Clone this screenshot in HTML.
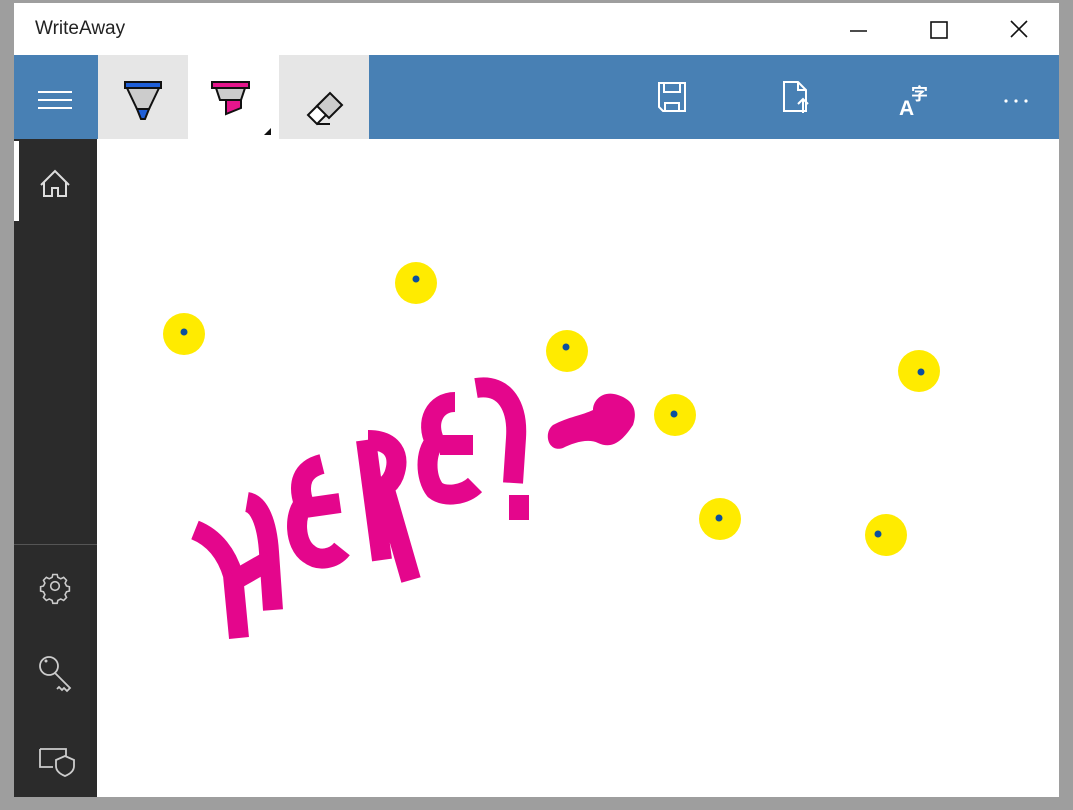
<!DOCTYPE html>
<html><head><style>
*{margin:0;padding:0;box-sizing:border-box}
body{width:1073px;height:810px;background:#9e9e9e;position:relative;overflow:hidden;font-family:"Liberation Sans","Segoe UI",sans-serif}
.win{position:absolute;left:14px;top:3px;width:1045px;height:794px;background:#fff}
.title{position:absolute;left:21px;top:15px;font-size:19px;color:#222}
.tb{position:absolute;left:0;top:52px;width:1045px;height:84px;background:#4880b4}
.side{position:absolute;left:0;top:136px;width:83px;height:658px;background:#2b2b2b}
svg{position:absolute}
</style></head><body>
<div class="win">
<div class="title">WriteAway</div>
<svg style="left:830px;top:10px" width="200" height="32" viewBox="0 0 200 32">
<line x1="6" y1="18" x2="23" y2="18" stroke="#111" stroke-width="1.5"/>
<rect x="87" y="9" width="16" height="16" fill="none" stroke="#111" stroke-width="1.6"/>
<path d="M167 8 L183 24 M183 8 L167 24" stroke="#111" stroke-width="1.6"/>
</svg>
<div class="tb">
<div style="position:absolute;left:84px;top:0;width:90px;height:84px;background:#e6e6e6"></div>
<div style="position:absolute;left:174px;top:0;width:91px;height:84px;background:#fff"></div>
<div style="position:absolute;left:265px;top:0;width:90px;height:84px;background:#e6e6e6"></div>
<svg style="left:0;top:0" width="360" height="84" viewBox="0 0 360 84">
<path d="M24 37h34M24 45h34M24 53h34" stroke="#fff" stroke-width="2"/>
<path d="M111 27h36v6h-36z" fill="#1f5fd8" stroke="#111" stroke-width="2"/>
<path d="M113 33h32l-10 21h-12z" fill="#ccc" stroke="#111" stroke-width="2"/>
<path d="M123 54h12l-4 10h-4z" fill="#1f5fd8" stroke="#111" stroke-width="2"/>
<path d="M198 27h37v6h-37z" fill="#e5168c" stroke="#111" stroke-width="2"/>
<path d="M202 33h29l-4 12h-21z" fill="#ccc" stroke="#111" stroke-width="2"/>
<path d="M212 45h15v8l-15 6z" fill="#e5168c" stroke="#111" stroke-width="2"/>
<path d="M250 80l7-7v7z" fill="#111"/>
<path d="M294 60l18-18 9 9-18 18z" fill="#fff" stroke="#111" stroke-width="2"/>
<path d="M303 51l13-13 12 12-13 13z" fill="#ccc" stroke="#111" stroke-width="2"/>
<path d="M303 69h13" stroke="#111" stroke-width="2"/>
</svg>
<svg style="left:630px;top:20px" width="410" height="46" viewBox="0 0 410 46">
<path d="M15 8h26v28H19l-4-4z" fill="none" stroke="#fff" stroke-width="2"/>
<path d="M20 8v9h16V8M21 36v-8h14v8" fill="none" stroke="#fff" stroke-width="2"/>
<path d="M140 7h14l8 8v21h-22z M154 7v8h8" fill="none" stroke="#fff" stroke-width="2"/>
<path d="M159 38v-13 M154 29l5-5 5 5" fill="none" stroke="#fff" stroke-width="2"/>
<text x="255" y="40" fill="#fff" font-size="21" font-weight="bold" font-family="Liberation Sans,sans-serif">A</text>
<text x="267" y="25" fill="#fff" font-size="17" font-weight="bold" font-family="Noto Sans CJK SC,sans-serif">字</text>
<circle cx="362" cy="26" r="1.6" fill="#fff"/><circle cx="372" cy="26" r="1.6" fill="#fff"/><circle cx="382" cy="26" r="1.6" fill="#fff"/>
</svg>
</div>
<div class="side">
<div style="position:absolute;left:0;top:2px;width:5px;height:80px;background:#fff"></div>
<div style="position:absolute;left:0;top:405px;width:83px;height:1px;background:#555"></div>
<svg style="left:0;top:0" width="83" height="658" viewBox="0 0 83 658">
<path d="M27 46L41 32 55 46M30 43v14h8v-8h6v8h8V43" fill="none" stroke="#ddd" stroke-width="2"/>
<g transform="translate(41,447) scale(0.72)" fill="none" stroke="#ccc" stroke-width="2.2">
<circle r="6"/>
<path d="M-3 -16h6l1 4 4 2 4-2 4 4-2 4 2 4 4 1v6l-4 1-2 4 2 4-4 4-4-2-4 2-1 4h-6l-1-4-4-2-4 2-4-4 2-4-2-4-4-1v-6l4-1 2-4-2-4 4-4 4 2 4-2z"/>
</g>
<g fill="none" stroke="#ccc" stroke-width="1.8">
<circle cx="35" cy="527" r="9"/>
<path d="M41 534l15 15-3 3-3-3-2 2-3-3-2 2"/>
<path d="M26 610h26v8M39 628H26v-18"/>
<path d="M51 617l9 4v6c0 5-4 8-9 10-5-2-9-5-9-10v-6z"/>
</g>
<circle cx="32" cy="522" r="1.5" fill="#ccc"/>
</svg>
</div>
</div>
<svg style="left:0;top:0" width="1073" height="810" viewBox="0 0 1073 810">
<g fill="#ffeb00">
<circle cx="184" cy="334" r="21"/><circle cx="416" cy="283" r="21"/><circle cx="567" cy="351" r="21"/>
<circle cx="675" cy="415" r="21"/><circle cx="919" cy="371" r="21"/><circle cx="720" cy="519" r="21"/><circle cx="886" cy="535" r="21"/>
</g>
<g fill="#0b4f9e">
<circle cx="184" cy="332" r="3.5"/><circle cx="416" cy="279" r="3.5"/><circle cx="566" cy="347" r="3.5"/>
<circle cx="674" cy="414" r="3.5"/><circle cx="921" cy="372" r="3.5"/><circle cx="719" cy="518" r="3.5"/><circle cx="878" cy="534" r="3.5"/>
</g>
<g fill="none" stroke="#e4068c" stroke-width="20" stroke-linecap="butt">
<path d="M195 530c20 8 32 25 38 45l6 63"/>
<path d="M247 502c12 2 20 20 22 50l4 58"/>
<path d="M235 580l35-20"/>
<path d="M322 464c-20 5-25 20-18 40-10 10-10 40 5 50 10 8 25 5 33-5M305 508l35-5"/>
<path d="M366 440l16 120M368 440c25 0 33 15 26 35-4 10-15 18-25 15M385 490l26 90"/>
<path d="M455 402c-20 0-30 20-20 40-10 10-10 35 0 48 10 8 30 5 40-5M440 445l33 0"/>
<path d="M476 388c30-5 42 20 40 50l-3 45M519 495v25"/>
</g>
<path d="M553 425c15-8 30-10 40-15 0-10 10-20 25-15 15 5 20 15 15 30-10 15-20 25-35 18-10-5-25 0-35 5-15 5-20-15-10-23z" fill="#e4068c"/>
</svg>
</body></html>
